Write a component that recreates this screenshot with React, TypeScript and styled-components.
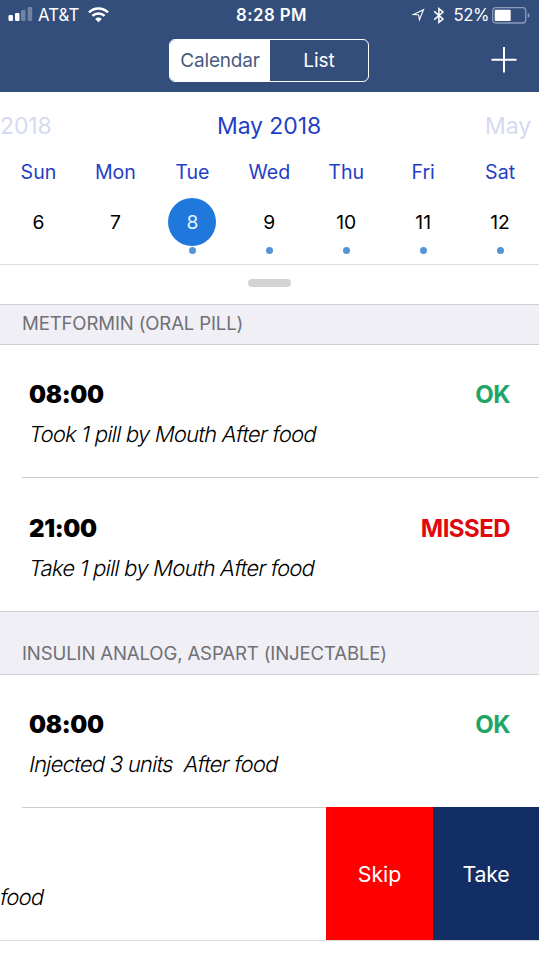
import React from 'react';
import styled, { createGlobalStyle } from 'styled-components';

const GlobalStyle = createGlobalStyle`
  * { box-sizing: border-box; }
  html, body { margin: 0; padding: 0; }
  body {
    width: 539px;
    height: 960px;
    overflow: hidden;
    background: #fff;
    font-family: Inter, "Liberation Sans", sans-serif;
    font-feature-settings: "calt" 0;
  }
  button { font: inherit; border: 0; padding: 0; margin: 0; }
`;

const Screen = styled.main`
  width: 539px;
  height: 960px;
  overflow: hidden;
  display: flex;
  flex-direction: column;
  background: #fff;
  color: #000;
`;

const Header = styled.header`
  height: 92px;
  flex: none;
  background: #344e7c;
  color: #fff;
`;

const StatusBar = styled.div`
  height: 30px;
  display: grid;
  grid-template-columns: 1fr auto 1fr;
  align-items: center;
  padding: 0 8px;
  font-size: 16.8px;
  line-height: 30px;
`;

const StatusGroup = styled.div<{ $end?: boolean }>`
  display: flex;
  align-items: center;
  justify-content: ${(p) => (p.$end ? 'flex-end' : 'flex-start')};
  svg { display: block; flex: none; }
`;

const Carrier = styled.span`
  margin: 0 8px 0 5px;
  letter-spacing: 0.1px;
`;

const Clock = styled.span`
  font-weight: 600;
  letter-spacing: 0.45px;
  padding-left: 4px;
`;

const Percent = styled.span`
  margin: 0 3px 0 9px;
  letter-spacing: -0.5px;
`;

const NavBar = styled.div`
  height: 62px;
  display: grid;
  grid-template-columns: 169px 200px 1fr;
  align-items: start;
  padding-top: 9px;
`;

const Segmented = styled.div`
  grid-column: 2;
  display: grid;
  grid-template-columns: 100px 1fr;
  height: 43px;
  border: 1.5px solid #fff;
  border-radius: 6px;
  overflow: hidden;
`;

const Segment = styled.button<{ $active?: boolean }>`
  font-size: 19px;
  line-height: 41px;
  letter-spacing: ${(p) => (p.$active ? '-0.2px' : '0')};
  color: ${(p) => (p.$active ? '#4a5a80' : '#fff')};
  background: ${(p) => (p.$active ? '#fff' : 'transparent')};
`;

const AddButton = styled.button`
  justify-self: end;
  width: 26px;
  height: 26px;
  margin: 8px 22px 0 0;
  color: #fff;
  background: none;
  svg { display: block; }
`;

const Calendar = styled.section`
  height: 172px;
  flex: none;
  overflow: hidden;
`;

const Months = styled.div`
  height: 68px;
  display: grid;
  grid-template-columns: 1fr auto 1fr;
  font-size: 23px;
  line-height: 68px;
`;

const Month = styled.span<{ $faded?: boolean; $end?: boolean }>`
  color: ${(p) => (p.$faded ? '#d5daf0' : '#1f40c6')};
  text-align: ${(p) => (p.$end ? 'right' : 'left')};
  padding-right: ${(p) => (p.$end ? 8 : 0)}px;
  margin-left: ${(p) => (p.$faded ? 0 : -1)}px;
  letter-spacing: -0.1px;
  white-space: nowrap;
`;

const Week = styled.div`
  display: grid;
  grid-template-columns: repeat(7, 76.95px);
`;

const Day = styled.div`
  display: flex;
  flex-direction: column;
  align-items: center;
`;

const Weekday = styled.span`
  height: 38px;
  line-height: 25px;
  font-size: 19.6px;
  letter-spacing: 0;
  color: #1f40c6;
`;

const DateNumber = styled.span<{ $selected?: boolean }>`
  width: 48px;
  height: 48px;
  border-radius: 50%;
  font-size: 19.3px;
  line-height: 48px;
  text-align: center;
  color: ${(p) => (p.$selected ? '#e4f3ff' : '#000')};
  background: ${(p) => (p.$selected ? '#2077dc' : 'transparent')};
`;

const EventDot = styled.i`
  width: 7px;
  height: 7px;
  margin-top: 1px;
  border-radius: 50%;
  background: #5594d8;
`;

const HandleStrip = styled.div`
  height: 40px;
  flex: none;
  border-top: 1px solid #dedee0;
  display: flex;
  justify-content: center;
  padding-top: 14px;
`;

const Handle = styled.div`
  width: 43px;
  height: 8px;
  border-radius: 4px;
  background: #d3d3d3;
`;

const SectionTitle = styled.h2<{ $height: number }>`
  margin: 0;
  flex: none;
  height: ${(p) => p.$height}px;
  border-top: 1px solid #cfced3;
  border-bottom: 1px solid #cfced3;
  background: #efeff5;
  color: #707075;
  font-size: 18.6px;
  font-weight: 400;
  line-height: 22px;
  letter-spacing: -0.15px;
  padding: 0 0 10px 22px;
  display: flex;
  align-items: flex-end;
  white-space: nowrap;
`;

const Dose = styled.article<{ $divided?: boolean; $top: number }>`
  height: 133px;
  flex: none;
  margin-left: 22px;
  padding: ${(p) => p.$top}px 29px 0 7px;
  border-bottom: ${(p) => (p.$divided ? '1px solid #cccccf' : '0')};
`;

const DoseHead = styled.div`
  display: flex;
  justify-content: space-between;
  font-size: 24px;
  line-height: 30px;
`;

const Time = styled.time`
  font-weight: 900;
  letter-spacing: -0.35px;
`;

const Status = styled.span<{ $missed?: boolean }>`
  font-weight: 650;
  color: ${(p) => (p.$missed ? '#e2090e' : '#22a467')};
  letter-spacing: -0.55px;
`;

/* Slanted roman letterforms, as the system font draws its oblique. */
const Note = styled.p`
  margin: 9px 0 0 -1px;
  font-size: 22px;
  line-height: 30px;
  font-weight: 300;
  letter-spacing: -0.75px;
  white-space: pre;
  transform: skewX(-11deg);
  transform-origin: 0 75%;
`;

const SwipedDose = styled.article`
  height: 134px;
  flex: none;
  margin-top: -1px;
  display: grid;
  grid-template-columns: 326px 107px 106px;
  border-bottom: 1px solid #d9d9db;
`;

const SwipedContent = styled.div`
  overflow: hidden;
  padding: 66px 0 0;
`;

const Action = styled.button<{ $danger?: boolean }>`
  font-size: 21.3px;
  letter-spacing: ${(p) => (p.$danger ? 0 : -0.2)}px;
  color: #fff;
  background: ${(p) => (p.$danger ? '#fe0000' : '#132e64')};
`;

const Gap = styled.span`
  width: 8px;
`;

const SignalIcon = () => (
  <svg width="25" height="16" viewBox="0 0 25 16" fill="#fff">
    <rect x="0.5" y="8" width="4.5" height="6" rx="1.2" />
    <rect x="7" y="6" width="4.5" height="8" rx="1.2" />
    <rect x="13" y="3" width="4.5" height="11" rx="1.2" opacity="0.3" />
    <rect x="19.7" y="0" width="4.5" height="14" rx="1.2" opacity="0.3" />
  </svg>
);

const WifiIcon = () => (
  <svg width="21" height="16" viewBox="0 0 21 16" fill="none" stroke="#fff" strokeWidth="2.5">
    <path d="M1 5.4a13.6 13.6 0 0 1 19 0" />
    <path d="M4.4 8.9a8.7 8.7 0 0 1 12.2 0" />
    <path d="M7.2 11.9a4.7 4.7 0 0 1 6.6 0L10.5 15.2Z" fill="#fff" stroke="none" />
  </svg>
);

const LocationIcon = () => (
  <svg width="14" height="14" viewBox="0 0 14 14">
    <path fill="#fff" fillRule="evenodd" d="M0.2 6.9 13.6 0.6 8.2 13.8 7.1 7.3ZM4.4 6.1 8 6.4 8.7 9.7 11.4 2.9Z" />
  </svg>
);

const BluetoothIcon = () => (
  <svg width="12" height="17" viewBox="0 0 12 17" fill="none" stroke="#fff" strokeWidth="1.5">
    <path d="M1.2 4.4 10 12 5.9 15.4V1.6L10 5 1.2 12.6" />
  </svg>
);

const BatteryIcon = () => (
  <svg width="39" height="17" viewBox="0 0 39 17">
    <rect x="0.7" y="0.7" width="33" height="15.3" rx="3" fill="none" stroke="#8b9bb9" strokeWidth="1.3" />
    <rect x="2.7" y="2.7" width="16" height="11.3" rx="1" fill="#fff" />
    <path d="M35.7 6c2.4.6 2.4 4.2 0 4.8Z" fill="#8b9bb9" />
  </svg>
);

const PlusIcon = () => (
  <svg width="26" height="26" viewBox="0 0 26 26" stroke="#fff" strokeWidth="2">
    <path d="M0.5 12.8h25M13 0v25.5" />
  </svg>
);

const week = [
  { name: 'Sun', date: 6, event: false },
  { name: 'Mon', date: 7, event: false },
  { name: 'Tue', date: 8, event: true, selected: true },
  { name: 'Wed', date: 9, event: true },
  { name: 'Thu', date: 10, event: true },
  { name: 'Fri', date: 11, event: true },
  { name: 'Sat', date: 12, event: true },
];

export default function App() {
  return (
    <>
      <GlobalStyle />
      <Screen>
        <Header>
          <StatusBar>
            <StatusGroup>
              <SignalIcon />
              <Carrier>AT&amp;T</Carrier>
              <WifiIcon />
            </StatusGroup>
            <Clock>8:28 PM</Clock>
            <StatusGroup $end>
              <LocationIcon />
              <Gap />
              <BluetoothIcon />
              <Percent>52%</Percent>
              <BatteryIcon />
            </StatusGroup>
          </StatusBar>
          <NavBar>
            <Segmented>
              <Segment $active>Calendar</Segment>
              <Segment>List</Segment>
            </Segmented>
            <AddButton aria-label="Add">
              <PlusIcon />
            </AddButton>
          </NavBar>
        </Header>

        <Calendar>
          <Months>
            <Month $faded>2018</Month>
            <Month>May 2018</Month>
            <Month $faded $end>May</Month>
          </Months>
          <Week>
            {week.map((d) => (
              <Day key={d.name}>
                <Weekday>{d.name}</Weekday>
                <DateNumber $selected={d.selected}>{d.date}</DateNumber>
                {d.event && <EventDot />}
              </Day>
            ))}
          </Week>
        </Calendar>
        <HandleStrip>
          <Handle />
        </HandleStrip>

        <SectionTitle $height={41}>METFORMIN (ORAL PILL)</SectionTitle>
        <Dose $divided $top={35}>
          <DoseHead>
            <Time>08:00</Time>
            <Status>OK</Status>
          </DoseHead>
          <Note>Took 1 pill by Mouth After food</Note>
        </Dose>
        <Dose $top={36}>
          <DoseHead>
            <Time>21:00</Time>
            <Status $missed>MISSED</Status>
          </DoseHead>
          <Note>Take 1 pill by Mouth After food</Note>
        </Dose>

        <SectionTitle $height={64}>INSULIN ANALOG, ASPART (INJECTABLE)</SectionTitle>
        <Dose $divided $top={35}>
          <DoseHead>
            <Time>08:00</Time>
            <Status>OK</Status>
          </DoseHead>
          <Note>{'Injected 3 units  After food'}</Note>
        </Dose>
        <SwipedDose>
          <SwipedContent>
            <Note>food</Note>
          </SwipedContent>
          <Action $danger>Skip</Action>
          <Action>Take</Action>
        </SwipedDose>
      </Screen>
    </>
  );
}
